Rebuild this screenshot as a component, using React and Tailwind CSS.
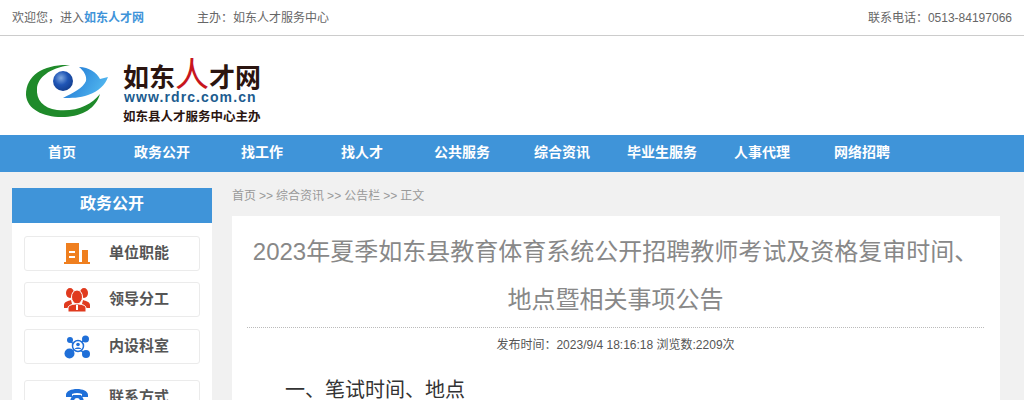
const FONT = "font-['Liberation_Sans','Noto_Sans_CJK_SC',sans-serif]";

const navItems = ['首页', '政务公开', '找工作', '找人才', '公共服务', '综合资讯', '毕业生服务', '人事代理', '网络招聘'];

function Logo() {
  return (
    <svg width="110" height="75" viewBox="0 0 110 75" className="shrink-0">
      <defs>
        <radialGradient id="ball" cx="0.4" cy="0.35" r="0.7">
          <stop offset="0" stopColor="#7fa8e0" />
          <stop offset="0.5" stopColor="#1f55b5" />
          <stop offset="1" stopColor="#123d8c" />
        </radialGradient>
        <linearGradient id="bird" x1="0" y1="0" x2="1" y2="0.4">
          <stop offset="0" stopColor="#1a6fd0" />
          <stop offset="1" stopColor="#4fb4ee" />
        </linearGradient>
      </defs>
      <path d="M55 15C30 14 11 24 11 45C12 60 30 68 50 67C68 66 81 58 85 44C76 55 62 62 42 60C28 58 21 50 22 38C23 28 34 18 55 15Z" fill="#1f8a2a" />
      <circle cx="48" cy="31" r="10" fill="url(#ball)" />
      <path d="M64 17C74 17 82 23 85 29L93 27C90 35 84 41 73 45C65 48 56 48 48 48C58 43 68 38 71 31C72 26 69 21 64 17Z" fill="url(#bird)" />
    </svg>
  );
}

function BuildingIcon() {
  return (
    <svg width="26" height="22" viewBox="0 0 26 22">
      <path d="M2 0H15V19H2Z" fill="#ef7f1f" />
      <path d="M18 7H24V19H18Z" fill="#ef7f1f" />
      <path d="M0 19H26V21H0Z" fill="#ef7f1f" />
      <path d="M5 8H11V10H5ZM5 13H11V15H5Z" fill="#fff" />
    </svg>
  );
}

function PeopleIcon() {
  return (
    <svg width="26" height="24" viewBox="0 0 26 24">
      <ellipse cx="6" cy="5" rx="4" ry="5" fill="#e03a1e" />
      <ellipse cx="20" cy="5" rx="4" ry="5" fill="#e03a1e" />
      <path d="M0 20V17C0 14 4 13 7 12L9 20ZM26 20V17C26 14 22 13 19 12L17 20Z" fill="#e03a1e" />
      <ellipse cx="13" cy="9" rx="5.5" ry="7" fill="#e03a1e" stroke="#fff" strokeWidth="1" />
      <path d="M4 24V20C4 17 9 16 13 16C17 16 22 17 22 20V24Z" fill="#e03a1e" stroke="#fff" strokeWidth="1" />
      <path d="M12 17H14V22H12Z" fill="#fff" />
    </svg>
  );
}

function NetworkIcon() {
  return (
    <svg width="26" height="24" viewBox="0 0 26 24">
      <path d="M5 5L21 19M21 4L5 19" stroke="#1f6fd8" strokeWidth="1.5" />
      <circle cx="6" cy="5" r="3" fill="#1f6fd8" />
      <circle cx="21.5" cy="4" r="3.5" fill="#1f6fd8" />
      <circle cx="5.5" cy="18.5" r="5" fill="#1f6fd8" />
      <circle cx="22" cy="19" r="4" fill="#1f6fd8" />
      <circle cx="14" cy="11" r="5.5" fill="#fff" stroke="#1f6fd8" strokeWidth="1.5" />
      <circle cx="14" cy="9.5" r="1.8" fill="#1f6fd8" />
      <path d="M10.8 14C11 12 17 12 17.2 14Z" fill="#1f6fd8" />
    </svg>
  );
}

function PhoneIcon() {
  return (
    <svg width="26" height="24" viewBox="0 0 24 24">
      <path d="M1 9C1 1 23 1 23 9V11H17V8C14 6.5 10 6.5 7 8V11H1Z" fill="#1f6fd8" />
      <path d="M6 12L8 9H16L18 12L21 21H3Z" fill="#1f6fd8" />
      <circle cx="12" cy="15" r="3" fill="#fff" />
    </svg>
  );
}

function SideItem({ icon, label, className }) {
  return (
    <div className={`h-[35px] flex items-center bg-white border border-[#ebebeb] rounded-[3px] ${className}`}>
      <div className="w-[84px] flex pl-[39px] shrink-0">{icon}</div>
      <span className="text-[15px] font-bold text-[#555]">{label}</span>
    </div>
  );
}

export default function App() {
  return (
    <div className={`h-[400px] overflow-hidden bg-[#f1f1f1] ${FONT}`}>
      {/* top bar */}
      <div className="h-[36px] bg-white border-b border-[#ccc] flex items-center px-[12px] text-[12px] text-[#666]">
        <span className="w-[185px]">
          欢迎您，进入<b className="text-[#3f94d9]">如东人才网</b>
        </span>
        <span>主办：如东人才服务中心</span>
        <span className="ml-auto">联系电话：0513-84197066</span>
      </div>

      {/* logo */}
      <div className="h-[99px] bg-white flex items-center pl-[15px] pt-[4px]">
        <Logo />
        <div className="-ml-[2px] flex flex-col pt-[6px]">
          <div className="h-[36px] flex items-end text-[26px] leading-[30px] font-bold text-[#2b1510]">
            如东<span className="w-[34px] text-center text-[34px] leading-[36px] text-[#c8161d] font-normal">人</span>才网
          </div>
          <div className="-mt-[4px] text-[14px] leading-[17px] font-bold text-[#1c5c8f] tracking-[1.1px] pl-[1px]">www.rdrc.com.cn</div>
          <div className="mt-[3px] text-[12.5px] leading-[16px] font-bold text-[#2b1510]">如东县人才服务中心主办</div>
        </div>
      </div>

      {/* nav */}
      <div className="h-[37px] bg-[#3f94d9] flex px-[12px]">
        {navItems.map((item) => (
          <a key={item} className="w-[100px] text-center text-[14px] font-bold leading-[35px] text-white">
            {item}
          </a>
        ))}
      </div>

      {/* body */}
      <div className="flex items-start gap-[20px] px-[12px] pt-[16px]">
        <aside className="w-[200px] shrink-0 bg-white">
          <div className="h-[35px] bg-[#3f94d9] text-center text-[16px] font-bold leading-[31px] text-white">政务公开</div>
          <div className="px-[12px] pt-[13px] pb-[12px]">
            <SideItem icon={<BuildingIcon />} label="单位职能" />
            <SideItem icon={<PeopleIcon />} label="领导分工" className="mt-[11px]" />
            <SideItem icon={<NetworkIcon />} label="内设科室" className="mt-[12px]" />
            <SideItem icon={<PhoneIcon />} label="联系方式" className="mt-[16px]" />
          </div>
        </aside>

        <main className="w-[768px]">
          <div className="h-[28px] pt-[1px] text-[12px] leading-[14px] text-[#999] [word-spacing:-0.3px]">首页 &gt;&gt; 综合资讯 &gt;&gt; 公告栏 &gt;&gt; 正文</div>
          <div className="bg-white pl-[15px] pr-[16px] pt-[12px] pb-[20px]">
            <h1 className="text-[24px] leading-[48px] text-[#888] text-center">
              2023年夏季如东县教育体育系统公开招聘教师考试及资格复审时间、地点暨相关事项公告
            </h1>
            <div className="mt-[3px] border-b border-dotted border-[#bbb]" />
            <div className="mt-[10px] text-center text-[12px] leading-[14px] text-[#555]">
              发布时间：2023/9/4 18:16:18 浏览数:2209次
            </div>
            <p className="mt-[24px] pl-[38px] text-[20px] leading-[28px] text-[#333]">一、笔试时间、地点</p>
          </div>
        </main>
      </div>
    </div>
  );
}
